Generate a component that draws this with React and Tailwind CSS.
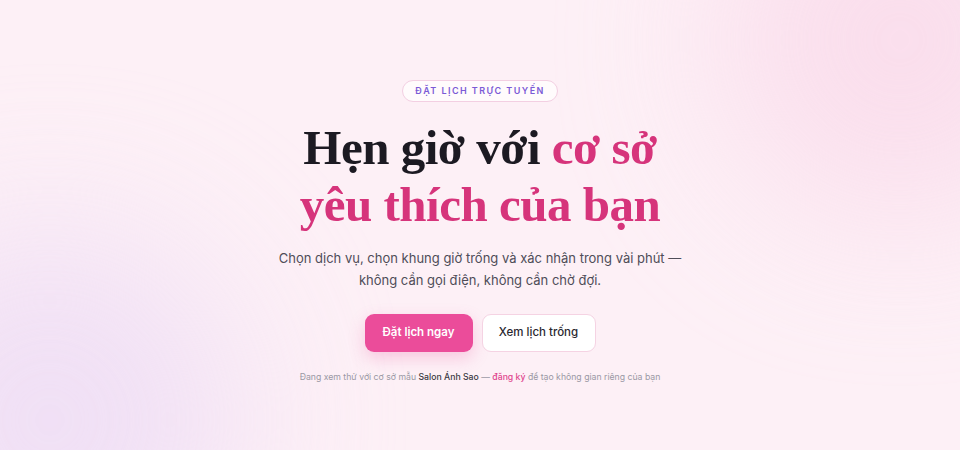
export default function App() {
  return (
    <div className="relative h-[450px] w-[960px] overflow-hidden bg-[#fdf0f6] font-['Inter',sans-serif]">
      {/* soft background blobs */}
      <div className="absolute -right-[120px] -top-[140px] h-[360px] w-[360px] rounded-full bg-[#f9d6e8] opacity-70 blur-[80px]" />
      <div className="absolute -bottom-[160px] -left-[140px] h-[380px] w-[380px] rounded-full bg-[#eddcf5] opacity-80 blur-[80px]" />

      <main className="relative flex flex-col items-center pt-[80px] text-center">
        <span className="rounded-full border border-[#f3cfe2] bg-white/70 px-[12px] py-[3px] text-[9px] font-semibold tracking-[0.16em] text-[#7b5ad6]">
          ĐẶT LỊCH TRỰC TUYẾN
        </span>

        <h1 className="mt-[17px] font-['Liberation_Serif',serif] text-[49px] font-bold leading-[57px] tracking-[-0.01em] text-[#1c1a22]">
          Hẹn giờ với <span className="text-[#d6347b]">cơ sở</span>
          <br />
          <span className="text-[#d6347b]">yêu thích của bạn</span>
        </h1>

        <p className="mt-[14px] text-[13px] leading-[22px] text-[#4f4d58]">
          Chọn dịch vụ, chọn khung giờ trống và xác nhận trong vài phút —
          <br />
          không cần gọi điện, không cần chờ đợi.
        </p>

        <div className="mt-[23px] flex gap-[9px]">
          <button className="h-[38px] w-[108px] rounded-[9px] bg-[#eb4c9a] text-[11.5px] font-semibold text-white shadow-[0_6px_16px_rgba(235,76,154,0.25)]">
            Đặt lịch ngay
          </button>
          <button className="h-[38px] w-[114px] rounded-[9px] border border-[#f5d3e3] bg-white text-[11.5px] font-medium text-[#2a2830]">
            Xem lịch trống
          </button>
        </div>

        <p className="mt-[19px] text-[8.7px] text-[#9a98a4]">
          Đang xem thử với cơ sở mẫu <span className="font-medium text-[#3a3842]">Salon Ánh Sao</span> —{" "}
          <span className="font-medium text-[#e0478f]">đăng ký</span> để tạo không gian riêng của bạn
        </p>
      </main>
    </div>
  );
}
